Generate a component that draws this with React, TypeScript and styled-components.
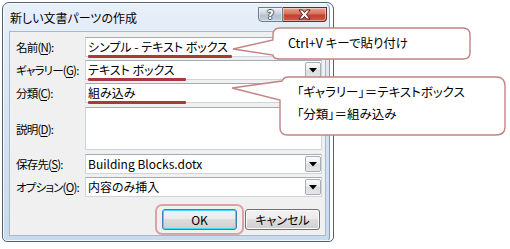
import React from "react";
import styled, { createGlobalStyle } from "styled-components";

const Global = createGlobalStyle`
  html, body { margin: 0; padding: 0; background: #ffffff; }
  body {
    font-family: "Noto Sans CJK JP", "Noto Sans", sans-serif;
    font-feature-settings: "palt";
    color: #000;
  }
`;

const Page = styled.div`
  position: relative;
  width: 510px;
  height: 249px;
  padding: 2px 0 0 2px;
  box-sizing: border-box;
  overflow: hidden;
`;

const Dialog = styled.div`
  width: 332px;
  height: 240px;
  box-sizing: border-box;
  border: 1px solid #56616d;
  border-radius: 7px 7px 5px 5px;
  background: linear-gradient(180deg, #e8f0f9 0%, #d6e4f3 45%, #c8daee 100%);
  box-shadow: inset 0 0 0 1px rgba(255, 255, 255, 0.75), inset -3px 0 0 #ffffff, inset -4px 0 0 #5ba8e8;
  display: flex;
  flex-direction: column;
  padding: 0 7px 5px 6px;
`;

const TitleBar = styled.div`
  height: 28px;
  display: flex;
  justify-content: space-between;
  align-items: flex-start;
  flex: none;
`;

const Title = styled.div`
  margin: 7px 0 0 1px;
  font-size: 12px;
  line-height: 16px;
  color: #000;
`;

const CaptionButtons = styled.div`
  display: flex;
  margin: 4px -1px 0 0;
`;

const CaptionButton = styled.div<{ $close?: boolean }>`
  height: 15px;
  width: ${(p) => (p.$close ? 44 : 25)}px;
  box-sizing: border-box;
  display: flex;
  align-items: center;
  justify-content: center;
  border: 1px solid ${(p) => (p.$close ? "#6b2a22" : "#6d7b8c")};
  border-left-width: ${(p) => (p.$close ? 0 : 1)}px;
  border-radius: ${(p) => (p.$close ? "0 0 4px 0" : "0 0 0 4px")};
  background: ${(p) =>
    p.$close
      ? "linear-gradient(180deg, #e9a493 0%, #d4705c 45%, #c2412e 55%, #cf5a3c 100%)"
      : "linear-gradient(180deg, #e9eef5 0%, #c9d3df 45%, #b4c0cf 55%, #c3cfdd 100%)"};
  box-shadow: inset 0 0 0 1px rgba(255, 255, 255, 0.45);
`;

const HelpGlyph = styled.span`
  font-family: "DejaVu Sans", sans-serif;
  font-weight: bold;
  font-size: 12px;
  line-height: 12px;
  color: #ffffff;
  text-shadow: 1px 0 0 #4c5866, -1px 0 0 #4c5866, 0 1px 0 #4c5866, 0 -1px 0 #4c5866;
`;

const Client = styled.div`
  flex: 1;
  box-sizing: border-box;
  background: #f0f0f0;
  border: 1px solid #a9b8c9;
  padding: 5px 3px 0 6px;
  display: flex;
  flex-direction: column;
`;

const Row = styled.div<{ $gap: number }>`
  display: grid;
  grid-template-columns: 69px 237px;
  align-items: center;
  margin-top: ${(p) => p.$gap}px;
`;

const Label = styled.label`
  font-size: 11.5px;
  line-height: 16px;
  letter-spacing: -0.8px;
  white-space: nowrap;
  u { text-decoration: underline; text-underline-offset: 2px; }
`;

const Field = styled.div<{ $h?: number }>`
  position: relative;
  height: ${(p) => p.$h ?? 20}px;
  box-sizing: border-box;
  background: #ffffff;
  border: 1px solid #cfd4db;
  border-top-color: #a6aab2;
  display: flex;
  align-items: flex-start;
`;

const FieldText = styled.div`
  flex: 1;
  padding: 0 0 0 2px;
  font-size: 12px;
  line-height: 18px;
  white-space: nowrap;
  overflow: hidden;
`;

const DropButton = styled.div`
  width: 16px;
  height: 16px;
  margin: 1px 0 0 0;
  box-sizing: border-box;
  border: 1px solid #a7adb5;
  border-radius: 2px;
  background: linear-gradient(180deg, #fbfbfb 0%, #eaeaea 50%, #dcdcdc 51%, #e6e6e6 100%);
  display: flex;
  align-items: center;
  justify-content: center;
`;

const Mark = styled.span<{ $w: number }>`
  position: absolute;
  left: 2px;
  bottom: -2px;
  height: 3px;
  width: ${(p) => p.$w}px;
  background: #a83a3a;
  border-radius: 1px;
`;

const ButtonRow = styled.div`
  display: flex;
  justify-content: flex-end;
  gap: 8px;
  margin-top: 12px;
  padding-right: 2px;
`;

const Highlight = styled.div`
  position: relative;
  &::after {
    content: "";
    position: absolute;
    left: -7px;
    right: -7px;
    top: -5px;
    bottom: -5px;
    border: 2px solid #dba4a4;
    border-radius: 7px;
    pointer-events: none;
  }
`;

const Button = styled.div<{ $primary?: boolean }>`
  width: 75px;
  height: 21px;
  box-sizing: border-box;
  border: 1px solid ${(p) => (p.$primary ? "#3c7fb1" : "#707070")};
  border-radius: 3px;
  background: linear-gradient(180deg, #f2f2f2 0%, #ebebeb 49%, #dddddd 50%, #cfcfcf 100%);
  box-shadow: inset 0 0 0 1px ${(p) => (p.$primary ? "#48d7fb" : "#fcfcfc")};
  display: flex;
  align-items: center;
  justify-content: center;
  font-size: 12px;
  line-height: 16px;
`;

const Callout = styled.div<{ $x: number; $y: number; $w: number; $h: number; $px: number; $py: number }>`
  position: absolute;
  left: ${(p) => p.$x}px;
  top: ${(p) => p.$y}px;
  width: ${(p) => p.$w}px;
  height: ${(p) => p.$h}px;
  box-sizing: border-box;
  padding: ${(p) => p.$py}px 0 0 ${(p) => p.$px}px;
  svg.shape { position: absolute; left: 0; top: 0; }
`;

const CalloutText = styled.div<{ $lh: number }>`
  position: relative;
  font-size: 12.5px;
  line-height: ${(p) => p.$lh}px;
  white-space: nowrap;
  color: #000;
`;

const Triangle = () => (
  <svg width="8" height="5" viewBox="0 0 8 5">
    <path d="M0 0 H8 L4 4.5 Z" fill="#000" />
  </svg>
);

const CloseIcon = () => (
  <svg width="15" height="11" viewBox="0 0 15 11">
    <path
      d="M2 1 H5.5 L7.5 3.5 L9.5 1 H13 L9.5 5.5 L13 10 H9.5 L7.5 7.5 L5.5 10 H2 L5.5 5.5 Z"
      fill="#ffffff"
      stroke="#4a1c16"
      strokeWidth="1"
      strokeLinejoin="round"
    />
  </svg>
);

export default function App() {
  return (
    <>
      <Global />
      <Page>
        <Dialog>
          <TitleBar>
            <Title>新しい文書パーツの作成</Title>
            <CaptionButtons>
              <CaptionButton>
                <HelpGlyph>?</HelpGlyph>
              </CaptionButton>
              <CaptionButton $close>
                <CloseIcon />
              </CaptionButton>
            </CaptionButtons>
          </TitleBar>
          <Client>
            <Row $gap={0}>
              <Label>名前(<u>N</u>):</Label>
              <Field>
                <FieldText>シンプル - テキスト ボックス</FieldText>
                <Mark $w={144} />
              </Field>
            </Row>
            <Row $gap={3}>
              <Label>ギャラリー(<u>G</u>):</Label>
              <Field>
                <FieldText>テキスト ボックス</FieldText>
                <DropButton>
                  <Triangle />
                </DropButton>
                <Mark $w={98} />
              </Field>
            </Row>
            <Row $gap={3}>
              <Label>分類(<u>C</u>):</Label>
              <Field>
                <FieldText>組み込み</FieldText>
                <Mark $w={98} />
              </Field>
            </Row>
            <Row $gap={4}>
              <Label>説明(<u>D</u>):</Label>
              <Field $h={43} />
            </Row>
            <Row $gap={4}>
              <Label>保存先(<u>S</u>):</Label>
              <Field>
                <FieldText>Building Blocks.dotx</FieldText>
                <DropButton>
                  <Triangle />
                </DropButton>
              </Field>
            </Row>
            <Row $gap={3}>
              <Label>オプション(<u>O</u>):</Label>
              <Field>
                <FieldText>内容のみ挿入</FieldText>
                <DropButton>
                  <Triangle />
                </DropButton>
              </Field>
            </Row>
            <ButtonRow>
              <Highlight>
                <Button $primary>OK</Button>
              </Highlight>
              <Button>キャンセル</Button>
            </ButtonRow>
          </Client>
        </Dialog>

        <Callout $x={230} $y={24} $w={244} $h={40} $px={58} $py={11}>
          <svg className="shape" width="244" height="40" viewBox="0 0 244 40">
            <path
              d="M50 4 H233 Q240 4 240 11 V29 Q240 35 233 35 H50 Q43 35 43 31 L3 25 L43 16 V11 Q43 4 50 4 Z"
              fill="#ffffff"
              stroke="#c28484"
              strokeWidth="1.4"
            />
          </svg>
          <CalloutText $lh={16}>Ctrl+V キーで貼り付け</CalloutText>
        </Callout>

        <Callout $x={228} $y={74} $w={280} $h={66} $px={69} $py={7}>
          <svg className="shape" width="280" height="66" viewBox="0 0 280 66">
            <path
              d="M60 3 H268 Q277 3 277 12 V53 Q277 61 268 61 H60 Q52 61 52 54 V26 L4 14 L54 7 Q56 3 60 3 Z"
              fill="#ffffff"
              stroke="#c28484"
              strokeWidth="1.4"
            />
          </svg>
          <CalloutText $lh={22}>「ギャラリー」＝テキストボックス</CalloutText>
          <CalloutText $lh={22}>「分類」＝組み込み</CalloutText>
        </Callout>
      </Page>
    </>
  );
}
